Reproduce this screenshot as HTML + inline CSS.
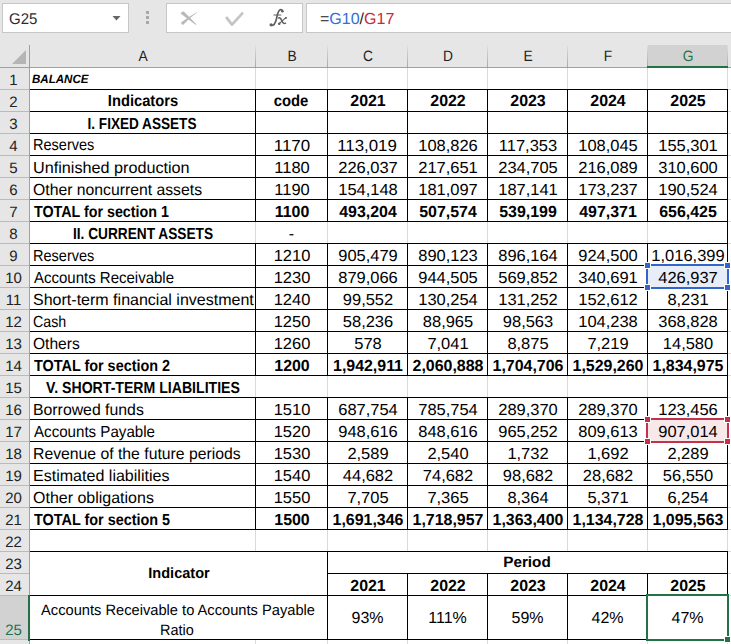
<!DOCTYPE html>
<html><head><meta charset="utf-8"><style>
html,body{margin:0;padding:0;}
body{width:731px;height:644px;overflow:hidden;position:relative;background:#e6e6e6;font-family:"Liberation Sans",sans-serif;}
.bg{position:absolute;left:0;top:0;width:731px;height:45px;background:#e6e6e6}
.box{position:absolute;background:#fff;border:1px solid #c6c6c6}
.r{position:absolute}
.ic{position:absolute}
.t{position:absolute;white-space:nowrap;color:#000;text-rendering:geometricPrecision}
.c{transform:translateX(-50%)}
</style></head><body>
<div class="bg"></div>
<div class="box" style="left:2px;top:3px;width:125px;height:28px"></div>
<div class="t" style="left:9px;top:10px;font-size:15.5px;color:#2a2a2a;line-height:20px;transform-origin:0 0;transform:scaleX(0.97)">G25</div>
<svg class="ic" style="left:112px;top:16px" width="9" height="5"><path d="M0.5 0 L8.5 0 L4.5 4.5 Z" fill="#666"/></svg>
<div class="r" style="left:146px;top:11px;width:3px;height:3px;background:#a8a8a8"></div>
<div class="r" style="left:146px;top:16px;width:3px;height:3px;background:#a8a8a8"></div>
<div class="r" style="left:146px;top:21px;width:3px;height:3px;background:#a8a8a8"></div>
<div class="box" style="left:166px;top:3px;width:135px;height:28px"></div>
<svg class="ic" style="left:170px;top:4px" width="80" height="28"><path d="M10.6 9.4 Q11.8 7.2 13.8 7.6 Q20 14 26.6 20.4 L25.6 20.8 Q18 15 10.6 9.4 Z" fill="#b9b9b9"/><path d="M26.8 8.2 Q19 12.5 11 18.6 Q11.2 20.6 13 20.9 Q19 14 26.9 8.7 Z" fill="#b9b9b9"/><path d="M56.6 13.6 L62 20.6 L73 8.6" stroke="#c4c4c4" stroke-width="2.7" stroke-linecap="butt" stroke-linejoin="round" fill="none"/><circle cx="56.8" cy="13.8" r="1.35" fill="#c4c4c4"/></svg>
<svg class="ic" style="left:264px;top:4px" width="30" height="26"><g fill="none" stroke="#5f5f5f" stroke-linecap="round"><path d="M18.6 7.2 C18.6 5.6 16.8 5.2 15.6 6.2 C13.9 7.6 13.3 11 12.4 15 C11.5 19 10.6 21.6 7.4 21.5" stroke-width="1.7"/><path d="M10 11 L16.8 11" stroke-width="1.2"/><path d="M14.6 14 C16.2 13.2 17 15 18 17 C19 19 19.6 20.3 21.6 19.2" stroke-width="1.5"/><path d="M22.2 13.8 C20.6 14.2 18 17.5 14.6 20" stroke-width="1.1"/></g><circle cx="18.3" cy="7.3" r="1.3" fill="#5f5f5f"/><circle cx="7" cy="20.7" r="1.5" fill="#5f5f5f"/><circle cx="15.3" cy="19.8" r="1.2" fill="#5f5f5f"/><circle cx="21.8" cy="14" r="1" fill="#5f5f5f"/></svg>
<div class="box" style="left:306px;top:3px;width:440px;height:28px"></div>
<div class="t" style="left:320px;top:9px;font-size:16px;line-height:21px;color:#222">=<span style="color:#2f6fd6">G10</span>/<span style="color:#c9283d">G17</span></div>
<div class="r" style="left:0;top:45px;width:731px;height:599px;background:#fff"></div>
<div class="r" style="left:0;top:45px;width:731px;height:22px;background:#e6e6e6"></div>
<div class="r" style="left:0;top:45px;width:29px;height:599px;background:#e6e6e6"></div>
<div class="r" style="left:648px;top:45px;width:79px;height:22px;background:#d2d2d2"></div>
<div class="r" style="left:0;top:596px;width:29px;height:44px;background:#d2d2d2"></div>
<div class="r" style="left:30px;top:89px;width:701px;height:1px;background:#dadada"></div>
<div class="r" style="left:30px;top:111px;width:701px;height:1px;background:#dadada"></div>
<div class="r" style="left:30px;top:133px;width:701px;height:1px;background:#dadada"></div>
<div class="r" style="left:30px;top:155px;width:701px;height:1px;background:#dadada"></div>
<div class="r" style="left:30px;top:177px;width:701px;height:1px;background:#dadada"></div>
<div class="r" style="left:30px;top:199px;width:701px;height:1px;background:#dadada"></div>
<div class="r" style="left:30px;top:221px;width:701px;height:1px;background:#dadada"></div>
<div class="r" style="left:30px;top:243px;width:701px;height:1px;background:#dadada"></div>
<div class="r" style="left:30px;top:265px;width:701px;height:1px;background:#dadada"></div>
<div class="r" style="left:30px;top:287px;width:701px;height:1px;background:#dadada"></div>
<div class="r" style="left:30px;top:309px;width:701px;height:1px;background:#dadada"></div>
<div class="r" style="left:30px;top:331px;width:701px;height:1px;background:#dadada"></div>
<div class="r" style="left:30px;top:353px;width:701px;height:1px;background:#dadada"></div>
<div class="r" style="left:30px;top:375px;width:701px;height:1px;background:#dadada"></div>
<div class="r" style="left:30px;top:397px;width:701px;height:1px;background:#dadada"></div>
<div class="r" style="left:30px;top:419px;width:701px;height:1px;background:#dadada"></div>
<div class="r" style="left:30px;top:441px;width:701px;height:1px;background:#dadada"></div>
<div class="r" style="left:30px;top:463px;width:701px;height:1px;background:#dadada"></div>
<div class="r" style="left:30px;top:485px;width:701px;height:1px;background:#dadada"></div>
<div class="r" style="left:30px;top:507px;width:701px;height:1px;background:#dadada"></div>
<div class="r" style="left:30px;top:529px;width:701px;height:1px;background:#dadada"></div>
<div class="r" style="left:30px;top:551px;width:701px;height:1px;background:#dadada"></div>
<div class="r" style="left:30px;top:573px;width:701px;height:1px;background:#dadada"></div>
<div class="r" style="left:30px;top:595px;width:701px;height:1px;background:#dadada"></div>
<div class="r" style="left:30px;top:639px;width:701px;height:1px;background:#dadada"></div>
<div class="r" style="left:255px;top:68px;width:1px;height:576px;background:#dadada"></div>
<div class="r" style="left:327px;top:68px;width:1px;height:576px;background:#dadada"></div>
<div class="r" style="left:407px;top:68px;width:1px;height:576px;background:#dadada"></div>
<div class="r" style="left:487px;top:68px;width:1px;height:576px;background:#dadada"></div>
<div class="r" style="left:567px;top:68px;width:1px;height:576px;background:#dadada"></div>
<div class="r" style="left:647px;top:68px;width:1px;height:576px;background:#dadada"></div>
<div class="r" style="left:727px;top:68px;width:1px;height:576px;background:#dadada"></div>
<div class="r" style="left:0;top:89px;width:29px;height:1px;background:#bababa"></div>
<div class="r" style="left:0;top:111px;width:29px;height:1px;background:#bababa"></div>
<div class="r" style="left:0;top:133px;width:29px;height:1px;background:#bababa"></div>
<div class="r" style="left:0;top:155px;width:29px;height:1px;background:#bababa"></div>
<div class="r" style="left:0;top:177px;width:29px;height:1px;background:#bababa"></div>
<div class="r" style="left:0;top:199px;width:29px;height:1px;background:#bababa"></div>
<div class="r" style="left:0;top:221px;width:29px;height:1px;background:#bababa"></div>
<div class="r" style="left:0;top:243px;width:29px;height:1px;background:#bababa"></div>
<div class="r" style="left:0;top:265px;width:29px;height:1px;background:#bababa"></div>
<div class="r" style="left:0;top:287px;width:29px;height:1px;background:#bababa"></div>
<div class="r" style="left:0;top:309px;width:29px;height:1px;background:#bababa"></div>
<div class="r" style="left:0;top:331px;width:29px;height:1px;background:#bababa"></div>
<div class="r" style="left:0;top:353px;width:29px;height:1px;background:#bababa"></div>
<div class="r" style="left:0;top:375px;width:29px;height:1px;background:#bababa"></div>
<div class="r" style="left:0;top:397px;width:29px;height:1px;background:#bababa"></div>
<div class="r" style="left:0;top:419px;width:29px;height:1px;background:#bababa"></div>
<div class="r" style="left:0;top:441px;width:29px;height:1px;background:#bababa"></div>
<div class="r" style="left:0;top:463px;width:29px;height:1px;background:#bababa"></div>
<div class="r" style="left:0;top:485px;width:29px;height:1px;background:#bababa"></div>
<div class="r" style="left:0;top:507px;width:29px;height:1px;background:#bababa"></div>
<div class="r" style="left:0;top:529px;width:29px;height:1px;background:#bababa"></div>
<div class="r" style="left:0;top:551px;width:29px;height:1px;background:#bababa"></div>
<div class="r" style="left:0;top:573px;width:29px;height:1px;background:#bababa"></div>
<div class="r" style="left:0;top:595px;width:29px;height:1px;background:#bababa"></div>
<div class="r" style="left:0;top:639px;width:29px;height:1px;background:#bababa"></div>
<div class="r" style="left:255px;top:45px;width:1px;height:22px;background:linear-gradient(#e0e0e0,#a8a8a8)"></div>
<div class="r" style="left:327px;top:45px;width:1px;height:22px;background:linear-gradient(#e0e0e0,#a8a8a8)"></div>
<div class="r" style="left:407px;top:45px;width:1px;height:22px;background:linear-gradient(#e0e0e0,#a8a8a8)"></div>
<div class="r" style="left:487px;top:45px;width:1px;height:22px;background:linear-gradient(#e0e0e0,#a8a8a8)"></div>
<div class="r" style="left:567px;top:45px;width:1px;height:22px;background:linear-gradient(#e0e0e0,#a8a8a8)"></div>
<div class="r" style="left:647px;top:45px;width:1px;height:22px;background:linear-gradient(#e0e0e0,#a8a8a8)"></div>
<div class="r" style="left:727px;top:45px;width:1px;height:22px;background:linear-gradient(#e0e0e0,#a8a8a8)"></div>
<div class="r" style="left:0;top:67px;width:731px;height:1px;background:#a0a0a0"></div>
<div class="r" style="left:29px;top:45px;width:1px;height:599px;background:#a0a0a0"></div>
<svg class="ic" style="left:0;top:45px" width="29" height="22"><path d="M12 19 L26 5 L26 19 Z" fill="#b5b5b5"/></svg>
<div class="t" style="left:143.0px;top:46px;line-height:22px;font-size:15px;color:#222;transform:translateX(-50%) scaleX(0.92)">A</div>
<div class="t" style="left:292.0px;top:46px;line-height:22px;font-size:15px;color:#222;transform:translateX(-50%) scaleX(0.92)">B</div>
<div class="t" style="left:368.0px;top:46px;line-height:22px;font-size:15px;color:#222;transform:translateX(-50%) scaleX(0.92)">C</div>
<div class="t" style="left:448.0px;top:46px;line-height:22px;font-size:15px;color:#222;transform:translateX(-50%) scaleX(0.92)">D</div>
<div class="t" style="left:528.0px;top:46px;line-height:22px;font-size:15px;color:#222;transform:translateX(-50%) scaleX(0.92)">E</div>
<div class="t" style="left:608.0px;top:46px;line-height:22px;font-size:15px;color:#222;transform:translateX(-50%) scaleX(0.92)">F</div>
<div class="t" style="left:688.0px;top:46px;line-height:22px;font-size:15px;color:#217346;transform:translateX(-50%) scaleX(0.92)">G</div>
<div class="r" style="left:647px;top:66px;width:81px;height:2px;background:#217346"></div>
<div class="r" style="left:28px;top:595px;width:2px;height:46px;background:#217346"></div>
<div class="t" style="left:-1px;width:29px;text-align:center;top:70px;line-height:22px;font-size:15px;color:#222">1</div>
<div class="t" style="left:-1px;width:29px;text-align:center;top:92px;line-height:22px;font-size:15px;color:#222">2</div>
<div class="t" style="left:-1px;width:29px;text-align:center;top:114px;line-height:22px;font-size:15px;color:#222">3</div>
<div class="t" style="left:-1px;width:29px;text-align:center;top:136px;line-height:22px;font-size:15px;color:#222">4</div>
<div class="t" style="left:-1px;width:29px;text-align:center;top:158px;line-height:22px;font-size:15px;color:#222">5</div>
<div class="t" style="left:-1px;width:29px;text-align:center;top:180px;line-height:22px;font-size:15px;color:#222">6</div>
<div class="t" style="left:-1px;width:29px;text-align:center;top:202px;line-height:22px;font-size:15px;color:#222">7</div>
<div class="t" style="left:-1px;width:29px;text-align:center;top:224px;line-height:22px;font-size:15px;color:#222">8</div>
<div class="t" style="left:-1px;width:29px;text-align:center;top:246px;line-height:22px;font-size:15px;color:#222">9</div>
<div class="t" style="left:-1px;width:29px;text-align:center;top:268px;line-height:22px;font-size:15px;color:#222">10</div>
<div class="t" style="left:-1px;width:29px;text-align:center;top:290px;line-height:22px;font-size:15px;color:#222">11</div>
<div class="t" style="left:-1px;width:29px;text-align:center;top:312px;line-height:22px;font-size:15px;color:#222">12</div>
<div class="t" style="left:-1px;width:29px;text-align:center;top:334px;line-height:22px;font-size:15px;color:#222">13</div>
<div class="t" style="left:-1px;width:29px;text-align:center;top:356px;line-height:22px;font-size:15px;color:#222">14</div>
<div class="t" style="left:-1px;width:29px;text-align:center;top:378px;line-height:22px;font-size:15px;color:#222">15</div>
<div class="t" style="left:-1px;width:29px;text-align:center;top:400px;line-height:22px;font-size:15px;color:#222">16</div>
<div class="t" style="left:-1px;width:29px;text-align:center;top:422px;line-height:22px;font-size:15px;color:#222">17</div>
<div class="t" style="left:-1px;width:29px;text-align:center;top:444px;line-height:22px;font-size:15px;color:#222">18</div>
<div class="t" style="left:-1px;width:29px;text-align:center;top:466px;line-height:22px;font-size:15px;color:#222">19</div>
<div class="t" style="left:-1px;width:29px;text-align:center;top:488px;line-height:22px;font-size:15px;color:#222">20</div>
<div class="t" style="left:-1px;width:29px;text-align:center;top:510px;line-height:22px;font-size:15px;color:#222">21</div>
<div class="t" style="left:-1px;width:29px;text-align:center;top:532px;line-height:22px;font-size:15px;color:#222">22</div>
<div class="t" style="left:-1px;width:29px;text-align:center;top:554px;line-height:22px;font-size:15px;color:#222">23</div>
<div class="t" style="left:-1px;width:29px;text-align:center;top:576px;line-height:22px;font-size:15px;color:#222">24</div>
<div class="t" style="left:-1px;width:29px;text-align:center;top:620px;line-height:22px;font-size:15px;color:#217346">25</div>
<div class="t" style="left:-1px;width:29px;text-align:center;top:642px;line-height:22px;font-size:15px;color:#222">26</div>
<div class="r" style="left:30px;top:552px;width:297px;height:87px;background:#fff"></div>
<div class="r" style="left:328px;top:552px;width:399px;height:21px;background:#fff"></div>
<div class="r" style="left:30px;top:89px;width:698px;height:1px;background:#000"></div>
<div class="r" style="left:30px;top:111px;width:698px;height:1px;background:#000"></div>
<div class="r" style="left:30px;top:133px;width:698px;height:1px;background:#000"></div>
<div class="r" style="left:30px;top:155px;width:698px;height:1px;background:#000"></div>
<div class="r" style="left:30px;top:177px;width:698px;height:1px;background:#000"></div>
<div class="r" style="left:30px;top:199px;width:698px;height:1px;background:#000"></div>
<div class="r" style="left:30px;top:221px;width:698px;height:1px;background:#000"></div>
<div class="r" style="left:30px;top:243px;width:698px;height:1px;background:#000"></div>
<div class="r" style="left:30px;top:265px;width:698px;height:1px;background:#000"></div>
<div class="r" style="left:30px;top:287px;width:698px;height:1px;background:#000"></div>
<div class="r" style="left:30px;top:309px;width:698px;height:1px;background:#000"></div>
<div class="r" style="left:30px;top:331px;width:698px;height:1px;background:#000"></div>
<div class="r" style="left:30px;top:353px;width:698px;height:1px;background:#000"></div>
<div class="r" style="left:30px;top:375px;width:698px;height:1px;background:#000"></div>
<div class="r" style="left:30px;top:397px;width:698px;height:1px;background:#000"></div>
<div class="r" style="left:30px;top:419px;width:698px;height:1px;background:#000"></div>
<div class="r" style="left:30px;top:441px;width:698px;height:1px;background:#000"></div>
<div class="r" style="left:30px;top:463px;width:698px;height:1px;background:#000"></div>
<div class="r" style="left:30px;top:485px;width:698px;height:1px;background:#000"></div>
<div class="r" style="left:30px;top:507px;width:698px;height:1px;background:#000"></div>
<div class="r" style="left:30px;top:529px;width:698px;height:1px;background:#000"></div>
<div class="r" style="left:255px;top:89px;width:1px;height:23px;background:#000"></div>
<div class="r" style="left:327px;top:89px;width:1px;height:23px;background:#000"></div>
<div class="r" style="left:407px;top:89px;width:1px;height:23px;background:#000"></div>
<div class="r" style="left:487px;top:89px;width:1px;height:23px;background:#000"></div>
<div class="r" style="left:567px;top:89px;width:1px;height:23px;background:#000"></div>
<div class="r" style="left:647px;top:89px;width:1px;height:23px;background:#000"></div>
<div class="r" style="left:727px;top:89px;width:1px;height:23px;background:#000"></div>
<div class="r" style="left:255px;top:111px;width:1px;height:23px;background:#000"></div>
<div class="r" style="left:327px;top:111px;width:1px;height:23px;background:#000"></div>
<div class="r" style="left:407px;top:111px;width:1px;height:23px;background:#000"></div>
<div class="r" style="left:487px;top:111px;width:1px;height:23px;background:#000"></div>
<div class="r" style="left:567px;top:111px;width:1px;height:23px;background:#000"></div>
<div class="r" style="left:647px;top:111px;width:1px;height:23px;background:#000"></div>
<div class="r" style="left:727px;top:111px;width:1px;height:23px;background:#000"></div>
<div class="r" style="left:255px;top:133px;width:1px;height:23px;background:#000"></div>
<div class="r" style="left:327px;top:133px;width:1px;height:23px;background:#000"></div>
<div class="r" style="left:407px;top:133px;width:1px;height:23px;background:#000"></div>
<div class="r" style="left:487px;top:133px;width:1px;height:23px;background:#000"></div>
<div class="r" style="left:567px;top:133px;width:1px;height:23px;background:#000"></div>
<div class="r" style="left:647px;top:133px;width:1px;height:23px;background:#000"></div>
<div class="r" style="left:727px;top:133px;width:1px;height:23px;background:#000"></div>
<div class="r" style="left:255px;top:155px;width:1px;height:23px;background:#000"></div>
<div class="r" style="left:327px;top:155px;width:1px;height:23px;background:#000"></div>
<div class="r" style="left:407px;top:155px;width:1px;height:23px;background:#000"></div>
<div class="r" style="left:487px;top:155px;width:1px;height:23px;background:#000"></div>
<div class="r" style="left:567px;top:155px;width:1px;height:23px;background:#000"></div>
<div class="r" style="left:647px;top:155px;width:1px;height:23px;background:#000"></div>
<div class="r" style="left:727px;top:155px;width:1px;height:23px;background:#000"></div>
<div class="r" style="left:255px;top:177px;width:1px;height:23px;background:#000"></div>
<div class="r" style="left:327px;top:177px;width:1px;height:23px;background:#000"></div>
<div class="r" style="left:407px;top:177px;width:1px;height:23px;background:#000"></div>
<div class="r" style="left:487px;top:177px;width:1px;height:23px;background:#000"></div>
<div class="r" style="left:567px;top:177px;width:1px;height:23px;background:#000"></div>
<div class="r" style="left:647px;top:177px;width:1px;height:23px;background:#000"></div>
<div class="r" style="left:727px;top:177px;width:1px;height:23px;background:#000"></div>
<div class="r" style="left:255px;top:199px;width:1px;height:23px;background:#000"></div>
<div class="r" style="left:327px;top:199px;width:1px;height:23px;background:#000"></div>
<div class="r" style="left:407px;top:199px;width:1px;height:23px;background:#000"></div>
<div class="r" style="left:487px;top:199px;width:1px;height:23px;background:#000"></div>
<div class="r" style="left:567px;top:199px;width:1px;height:23px;background:#000"></div>
<div class="r" style="left:647px;top:199px;width:1px;height:23px;background:#000"></div>
<div class="r" style="left:727px;top:199px;width:1px;height:23px;background:#000"></div>
<div class="r" style="left:727px;top:221px;width:1px;height:23px;background:#000"></div>
<div class="r" style="left:255px;top:243px;width:1px;height:23px;background:#000"></div>
<div class="r" style="left:327px;top:243px;width:1px;height:23px;background:#000"></div>
<div class="r" style="left:407px;top:243px;width:1px;height:23px;background:#000"></div>
<div class="r" style="left:487px;top:243px;width:1px;height:23px;background:#000"></div>
<div class="r" style="left:567px;top:243px;width:1px;height:23px;background:#000"></div>
<div class="r" style="left:647px;top:243px;width:1px;height:23px;background:#000"></div>
<div class="r" style="left:727px;top:243px;width:1px;height:23px;background:#000"></div>
<div class="r" style="left:255px;top:265px;width:1px;height:23px;background:#000"></div>
<div class="r" style="left:327px;top:265px;width:1px;height:23px;background:#000"></div>
<div class="r" style="left:407px;top:265px;width:1px;height:23px;background:#000"></div>
<div class="r" style="left:487px;top:265px;width:1px;height:23px;background:#000"></div>
<div class="r" style="left:567px;top:265px;width:1px;height:23px;background:#000"></div>
<div class="r" style="left:647px;top:265px;width:1px;height:23px;background:#000"></div>
<div class="r" style="left:727px;top:265px;width:1px;height:23px;background:#000"></div>
<div class="r" style="left:255px;top:287px;width:1px;height:23px;background:#000"></div>
<div class="r" style="left:327px;top:287px;width:1px;height:23px;background:#000"></div>
<div class="r" style="left:407px;top:287px;width:1px;height:23px;background:#000"></div>
<div class="r" style="left:487px;top:287px;width:1px;height:23px;background:#000"></div>
<div class="r" style="left:567px;top:287px;width:1px;height:23px;background:#000"></div>
<div class="r" style="left:647px;top:287px;width:1px;height:23px;background:#000"></div>
<div class="r" style="left:727px;top:287px;width:1px;height:23px;background:#000"></div>
<div class="r" style="left:255px;top:309px;width:1px;height:23px;background:#000"></div>
<div class="r" style="left:327px;top:309px;width:1px;height:23px;background:#000"></div>
<div class="r" style="left:407px;top:309px;width:1px;height:23px;background:#000"></div>
<div class="r" style="left:487px;top:309px;width:1px;height:23px;background:#000"></div>
<div class="r" style="left:567px;top:309px;width:1px;height:23px;background:#000"></div>
<div class="r" style="left:647px;top:309px;width:1px;height:23px;background:#000"></div>
<div class="r" style="left:727px;top:309px;width:1px;height:23px;background:#000"></div>
<div class="r" style="left:255px;top:331px;width:1px;height:23px;background:#000"></div>
<div class="r" style="left:327px;top:331px;width:1px;height:23px;background:#000"></div>
<div class="r" style="left:407px;top:331px;width:1px;height:23px;background:#000"></div>
<div class="r" style="left:487px;top:331px;width:1px;height:23px;background:#000"></div>
<div class="r" style="left:567px;top:331px;width:1px;height:23px;background:#000"></div>
<div class="r" style="left:647px;top:331px;width:1px;height:23px;background:#000"></div>
<div class="r" style="left:727px;top:331px;width:1px;height:23px;background:#000"></div>
<div class="r" style="left:255px;top:353px;width:1px;height:23px;background:#000"></div>
<div class="r" style="left:327px;top:353px;width:1px;height:23px;background:#000"></div>
<div class="r" style="left:407px;top:353px;width:1px;height:23px;background:#000"></div>
<div class="r" style="left:487px;top:353px;width:1px;height:23px;background:#000"></div>
<div class="r" style="left:567px;top:353px;width:1px;height:23px;background:#000"></div>
<div class="r" style="left:647px;top:353px;width:1px;height:23px;background:#000"></div>
<div class="r" style="left:727px;top:353px;width:1px;height:23px;background:#000"></div>
<div class="r" style="left:727px;top:375px;width:1px;height:23px;background:#000"></div>
<div class="r" style="left:255px;top:397px;width:1px;height:23px;background:#000"></div>
<div class="r" style="left:327px;top:397px;width:1px;height:23px;background:#000"></div>
<div class="r" style="left:407px;top:397px;width:1px;height:23px;background:#000"></div>
<div class="r" style="left:487px;top:397px;width:1px;height:23px;background:#000"></div>
<div class="r" style="left:567px;top:397px;width:1px;height:23px;background:#000"></div>
<div class="r" style="left:647px;top:397px;width:1px;height:23px;background:#000"></div>
<div class="r" style="left:727px;top:397px;width:1px;height:23px;background:#000"></div>
<div class="r" style="left:255px;top:419px;width:1px;height:23px;background:#000"></div>
<div class="r" style="left:327px;top:419px;width:1px;height:23px;background:#000"></div>
<div class="r" style="left:407px;top:419px;width:1px;height:23px;background:#000"></div>
<div class="r" style="left:487px;top:419px;width:1px;height:23px;background:#000"></div>
<div class="r" style="left:567px;top:419px;width:1px;height:23px;background:#000"></div>
<div class="r" style="left:647px;top:419px;width:1px;height:23px;background:#000"></div>
<div class="r" style="left:727px;top:419px;width:1px;height:23px;background:#000"></div>
<div class="r" style="left:255px;top:441px;width:1px;height:23px;background:#000"></div>
<div class="r" style="left:327px;top:441px;width:1px;height:23px;background:#000"></div>
<div class="r" style="left:407px;top:441px;width:1px;height:23px;background:#000"></div>
<div class="r" style="left:487px;top:441px;width:1px;height:23px;background:#000"></div>
<div class="r" style="left:567px;top:441px;width:1px;height:23px;background:#000"></div>
<div class="r" style="left:647px;top:441px;width:1px;height:23px;background:#000"></div>
<div class="r" style="left:727px;top:441px;width:1px;height:23px;background:#000"></div>
<div class="r" style="left:255px;top:463px;width:1px;height:23px;background:#000"></div>
<div class="r" style="left:327px;top:463px;width:1px;height:23px;background:#000"></div>
<div class="r" style="left:407px;top:463px;width:1px;height:23px;background:#000"></div>
<div class="r" style="left:487px;top:463px;width:1px;height:23px;background:#000"></div>
<div class="r" style="left:567px;top:463px;width:1px;height:23px;background:#000"></div>
<div class="r" style="left:647px;top:463px;width:1px;height:23px;background:#000"></div>
<div class="r" style="left:727px;top:463px;width:1px;height:23px;background:#000"></div>
<div class="r" style="left:255px;top:485px;width:1px;height:23px;background:#000"></div>
<div class="r" style="left:327px;top:485px;width:1px;height:23px;background:#000"></div>
<div class="r" style="left:407px;top:485px;width:1px;height:23px;background:#000"></div>
<div class="r" style="left:487px;top:485px;width:1px;height:23px;background:#000"></div>
<div class="r" style="left:567px;top:485px;width:1px;height:23px;background:#000"></div>
<div class="r" style="left:647px;top:485px;width:1px;height:23px;background:#000"></div>
<div class="r" style="left:727px;top:485px;width:1px;height:23px;background:#000"></div>
<div class="r" style="left:255px;top:507px;width:1px;height:23px;background:#000"></div>
<div class="r" style="left:327px;top:507px;width:1px;height:23px;background:#000"></div>
<div class="r" style="left:407px;top:507px;width:1px;height:23px;background:#000"></div>
<div class="r" style="left:487px;top:507px;width:1px;height:23px;background:#000"></div>
<div class="r" style="left:567px;top:507px;width:1px;height:23px;background:#000"></div>
<div class="r" style="left:647px;top:507px;width:1px;height:23px;background:#000"></div>
<div class="r" style="left:727px;top:507px;width:1px;height:23px;background:#000"></div>
<div class="r" style="left:30px;top:551px;width:698px;height:1px;background:#000"></div>
<div class="r" style="left:327px;top:573px;width:401px;height:1px;background:#000"></div>
<div class="r" style="left:30px;top:595px;width:698px;height:1px;background:#000"></div>
<div class="r" style="left:30px;top:639px;width:698px;height:1px;background:#000"></div>
<div class="r" style="left:327px;top:551px;width:1px;height:89px;background:#000"></div>
<div class="r" style="left:727px;top:551px;width:1px;height:89px;background:#000"></div>
<div class="r" style="left:407px;top:573px;width:1px;height:67px;background:#000"></div>
<div class="r" style="left:487px;top:573px;width:1px;height:67px;background:#000"></div>
<div class="r" style="left:567px;top:573px;width:1px;height:67px;background:#000"></div>
<div class="r" style="left:647px;top:573px;width:1px;height:67px;background:#000"></div>
<div class="r" style="left:648px;top:266px;width:79px;height:21px;background:#e8eef9"></div>
<div class="r" style="left:646px;top:264px;width:83px;height:2px;background:#3366cc"></div>
<div class="r" style="left:646px;top:287px;width:83px;height:2px;background:#3366cc"></div>
<div class="r" style="left:646px;top:264px;width:2px;height:25px;background:#3366cc"></div>
<div class="r" style="left:727px;top:264px;width:2px;height:25px;background:#3366cc"></div>
<div class="r" style="left:645px;top:263px;width:5px;height:5px;background:#3366cc;box-shadow:0 0 0 1px #fff"></div>
<div class="r" style="left:725px;top:263px;width:5px;height:5px;background:#3366cc;box-shadow:0 0 0 1px #fff"></div>
<div class="r" style="left:645px;top:285px;width:5px;height:5px;background:#3366cc;box-shadow:0 0 0 1px #fff"></div>
<div class="r" style="left:725px;top:285px;width:5px;height:5px;background:#3366cc;box-shadow:0 0 0 1px #fff"></div>
<div class="r" style="left:648px;top:420px;width:79px;height:21px;background:#f9e8ea"></div>
<div class="r" style="left:646px;top:418px;width:83px;height:2px;background:#c4314b"></div>
<div class="r" style="left:646px;top:441px;width:83px;height:2px;background:#c4314b"></div>
<div class="r" style="left:646px;top:418px;width:2px;height:25px;background:#c4314b"></div>
<div class="r" style="left:727px;top:418px;width:2px;height:25px;background:#c4314b"></div>
<div class="r" style="left:645px;top:417px;width:5px;height:5px;background:#c4314b;box-shadow:0 0 0 1px #fff"></div>
<div class="r" style="left:725px;top:417px;width:5px;height:5px;background:#c4314b;box-shadow:0 0 0 1px #fff"></div>
<div class="r" style="left:645px;top:439px;width:5px;height:5px;background:#c4314b;box-shadow:0 0 0 1px #fff"></div>
<div class="r" style="left:725px;top:439px;width:5px;height:5px;background:#c4314b;box-shadow:0 0 0 1px #fff"></div>
<div id="bal" class="t" style="left:32.40px;top:69.84px;font-size:12px;line-height:18px;color:#000;font-weight:bold;font-style:italic;transform-origin:0 0;transform:scaleX(0.9628)">BALANCE</div>
<div id="c0_2" class="t" style="left:142.50px;top:91.46px;font-size:16px;line-height:22px;color:#000;font-weight:bold;transform:translateX(-50%) scaleX(0.9191)">Indicators</div>
<div id="c1_2" class="t" style="left:291.40px;top:91.46px;font-size:16px;line-height:22px;color:#000;font-weight:bold;transform:translateX(-50%) scaleX(0.9279)">code</div>
<div id="c2_2" class="t" style="left:367.50px;top:91.46px;font-size:16px;line-height:22px;color:#000;font-weight:bold;transform:translateX(-50%) scaleX(0.9950)">2021</div>
<div id="c3_2" class="t" style="left:447.50px;top:91.46px;font-size:16px;line-height:22px;color:#000;font-weight:bold;transform:translateX(-50%) scaleX(0.9950)">2022</div>
<div id="c4_2" class="t" style="left:527.50px;top:91.46px;font-size:16px;line-height:22px;color:#000;font-weight:bold;transform:translateX(-50%) scaleX(0.9950)">2023</div>
<div id="c5_2" class="t" style="left:607.50px;top:91.46px;font-size:16px;line-height:22px;color:#000;font-weight:bold;transform:translateX(-50%) scaleX(0.9950)">2024</div>
<div id="c6_2" class="t" style="left:687.50px;top:91.46px;font-size:16px;line-height:22px;color:#000;font-weight:bold;transform:translateX(-50%) scaleX(0.9950)">2025</div>
<div id="c0_3" class="t" style="left:141.70px;top:114.46px;font-size:16px;line-height:22px;color:#000;font-weight:bold;transform:translateX(-50%) scaleX(0.8492)">I. FIXED ASSETS</div>
<div id="c0_8" class="t" style="left:143.00px;top:224.46px;font-size:16px;line-height:22px;color:#000;font-weight:bold;transform:translateX(-50%) scaleX(0.8552)">II. CURRENT ASSETS</div>
<div id="c1_8" class="t" style="left:291.50px;top:224.46px;font-size:16px;line-height:22px;color:#000;transform:translateX(-50%) scaleX(1.0000)">-</div>
<div id="c0_15" class="t" style="left:142.90px;top:378.46px;font-size:16px;line-height:22px;color:#000;font-weight:bold;transform:translateX(-50%) scaleX(0.8814)">V. SHORT-TERM LIABILITIES</div>
<div id="c1_4" class="t" style="left:291.90px;top:136.46px;font-size:16px;line-height:22px;color:#000;transform:translateX(-50%) scaleX(1.0563)">1170</div>
<div id="c2_4" class="t" style="left:367.00px;top:136.46px;font-size:16px;line-height:22px;color:#000;transform:translateX(-50%) scaleX(1.0534)">113,019</div>
<div id="c0_4" class="t" style="left:33.00px;top:135.46px;font-size:16px;line-height:22px;color:#000;transform-origin:0 0;transform:scaleX(0.9073)">Reserves</div>
<div id="c3_4" class="t" style="left:447.50px;top:136.46px;font-size:16px;line-height:22px;color:#000;transform:translateX(-50%) scaleX(1.0300)">108,826</div>
<div id="c4_4" class="t" style="left:527.50px;top:136.46px;font-size:16px;line-height:22px;color:#000;transform:translateX(-50%) scaleX(1.0300)">117,353</div>
<div id="c5_4" class="t" style="left:607.50px;top:136.46px;font-size:16px;line-height:22px;color:#000;transform:translateX(-50%) scaleX(1.0300)">108,045</div>
<div id="c6_4" class="t" style="left:687.50px;top:136.46px;font-size:16px;line-height:22px;color:#000;transform:translateX(-50%) scaleX(1.0300)">155,301</div>
<div id="c0_5" class="t" style="left:33.00px;top:158.46px;font-size:16px;line-height:22px;color:#000;transform-origin:0 0;transform:scaleX(1.0117)">Unfinished production</div>
<div id="c1_5" class="t" style="left:291.50px;top:158.46px;font-size:16px;line-height:22px;color:#000;transform:translateX(-50%) scaleX(1.0300)">1180</div>
<div id="c2_5" class="t" style="left:367.50px;top:158.46px;font-size:16px;line-height:22px;color:#000;transform:translateX(-50%) scaleX(1.0300)">226,037</div>
<div id="c3_5" class="t" style="left:447.50px;top:158.46px;font-size:16px;line-height:22px;color:#000;transform:translateX(-50%) scaleX(1.0300)">217,651</div>
<div id="c4_5" class="t" style="left:527.50px;top:158.46px;font-size:16px;line-height:22px;color:#000;transform:translateX(-50%) scaleX(1.0300)">234,705</div>
<div id="c5_5" class="t" style="left:607.50px;top:158.46px;font-size:16px;line-height:22px;color:#000;transform:translateX(-50%) scaleX(1.0300)">216,089</div>
<div id="c6_5" class="t" style="left:687.50px;top:158.46px;font-size:16px;line-height:22px;color:#000;transform:translateX(-50%) scaleX(1.0300)">310,600</div>
<div id="c0_6" class="t" style="left:33.00px;top:180.46px;font-size:16px;line-height:22px;color:#000;transform-origin:0 0;transform:scaleX(0.9847)">Other noncurrent assets</div>
<div id="c1_6" class="t" style="left:291.50px;top:180.46px;font-size:16px;line-height:22px;color:#000;transform:translateX(-50%) scaleX(1.0300)">1190</div>
<div id="c2_6" class="t" style="left:367.50px;top:180.46px;font-size:16px;line-height:22px;color:#000;transform:translateX(-50%) scaleX(1.0300)">154,148</div>
<div id="c3_6" class="t" style="left:447.50px;top:180.46px;font-size:16px;line-height:22px;color:#000;transform:translateX(-50%) scaleX(1.0300)">181,097</div>
<div id="c4_6" class="t" style="left:527.50px;top:180.46px;font-size:16px;line-height:22px;color:#000;transform:translateX(-50%) scaleX(1.0300)">187,141</div>
<div id="c5_6" class="t" style="left:607.50px;top:180.46px;font-size:16px;line-height:22px;color:#000;transform:translateX(-50%) scaleX(1.0300)">173,237</div>
<div id="c6_6" class="t" style="left:687.50px;top:180.46px;font-size:16px;line-height:22px;color:#000;transform:translateX(-50%) scaleX(1.0300)">190,524</div>
<div id="c0_7" class="t" style="left:34.00px;top:202.46px;font-size:16px;line-height:22px;color:#000;font-weight:bold;transform-origin:0 0;transform:scaleX(0.8923)">TOTAL for section 1</div>
<div id="c1_7" class="t" style="left:291.50px;top:202.46px;font-size:16px;line-height:22px;color:#000;font-weight:bold;transform:translateX(-50%) scaleX(0.9950)">1100</div>
<div id="c2_7" class="t" style="left:367.50px;top:202.46px;font-size:16px;line-height:22px;color:#000;font-weight:bold;transform:translateX(-50%) scaleX(0.9950)">493,204</div>
<div id="c3_7" class="t" style="left:447.50px;top:202.46px;font-size:16px;line-height:22px;color:#000;font-weight:bold;transform:translateX(-50%) scaleX(0.9950)">507,574</div>
<div id="c4_7" class="t" style="left:527.50px;top:202.46px;font-size:16px;line-height:22px;color:#000;font-weight:bold;transform:translateX(-50%) scaleX(0.9950)">539,199</div>
<div id="c5_7" class="t" style="left:607.50px;top:202.46px;font-size:16px;line-height:22px;color:#000;font-weight:bold;transform:translateX(-50%) scaleX(0.9950)">497,371</div>
<div id="c6_7" class="t" style="left:687.50px;top:202.46px;font-size:16px;line-height:22px;color:#000;font-weight:bold;transform:translateX(-50%) scaleX(0.9950)">656,425</div>
<div id="c0_9" class="t" style="left:33.00px;top:246.46px;font-size:16px;line-height:22px;color:#000;transform-origin:0 0;transform:scaleX(0.9073)">Reserves</div>
<div id="c1_9" class="t" style="left:291.50px;top:246.46px;font-size:16px;line-height:22px;color:#000;transform:translateX(-50%) scaleX(1.0300)">1210</div>
<div id="c2_9" class="t" style="left:367.50px;top:246.46px;font-size:16px;line-height:22px;color:#000;transform:translateX(-50%) scaleX(1.0300)">905,479</div>
<div id="c3_9" class="t" style="left:447.50px;top:246.46px;font-size:16px;line-height:22px;color:#000;transform:translateX(-50%) scaleX(1.0300)">890,123</div>
<div id="c4_9" class="t" style="left:527.50px;top:246.46px;font-size:16px;line-height:22px;color:#000;transform:translateX(-50%) scaleX(1.0300)">896,164</div>
<div id="c5_9" class="t" style="left:607.50px;top:246.46px;font-size:16px;line-height:22px;color:#000;transform:translateX(-50%) scaleX(1.0300)">924,500</div>
<div id="c6_9" class="t" style="left:687.50px;top:246.46px;font-size:16px;line-height:22px;color:#000;transform:translateX(-50%) scaleX(1.0300)">1,016,399</div>
<div id="c0_10" class="t" style="left:34.00px;top:268.46px;font-size:16px;line-height:22px;color:#000;transform-origin:0 0;transform:scaleX(0.9369)">Accounts Receivable</div>
<div id="c1_10" class="t" style="left:291.50px;top:268.46px;font-size:16px;line-height:22px;color:#000;transform:translateX(-50%) scaleX(1.0300)">1230</div>
<div id="c2_10" class="t" style="left:367.50px;top:268.46px;font-size:16px;line-height:22px;color:#000;transform:translateX(-50%) scaleX(1.0300)">879,066</div>
<div id="c3_10" class="t" style="left:447.50px;top:268.46px;font-size:16px;line-height:22px;color:#000;transform:translateX(-50%) scaleX(1.0300)">944,505</div>
<div id="c4_10" class="t" style="left:527.50px;top:268.46px;font-size:16px;line-height:22px;color:#000;transform:translateX(-50%) scaleX(1.0300)">569,852</div>
<div id="c5_10" class="t" style="left:607.50px;top:268.46px;font-size:16px;line-height:22px;color:#000;transform:translateX(-50%) scaleX(1.0300)">340,691</div>
<div id="c6_10" class="t" style="left:687.50px;top:268.46px;font-size:16px;line-height:22px;color:#000;transform:translateX(-50%) scaleX(1.0300)">426,937</div>
<div id="c0_11" class="t" style="left:33.00px;top:290.46px;font-size:16px;line-height:22px;color:#000;transform-origin:0 0;transform:scaleX(1.0013)">Short-term financial investment</div>
<div id="c1_11" class="t" style="left:291.50px;top:290.46px;font-size:16px;line-height:22px;color:#000;transform:translateX(-50%) scaleX(1.0300)">1240</div>
<div id="c2_11" class="t" style="left:367.50px;top:290.46px;font-size:16px;line-height:22px;color:#000;transform:translateX(-50%) scaleX(1.0300)">99,552</div>
<div id="c3_11" class="t" style="left:447.50px;top:290.46px;font-size:16px;line-height:22px;color:#000;transform:translateX(-50%) scaleX(1.0300)">130,254</div>
<div id="c4_11" class="t" style="left:527.50px;top:290.46px;font-size:16px;line-height:22px;color:#000;transform:translateX(-50%) scaleX(1.0300)">131,252</div>
<div id="c5_11" class="t" style="left:607.50px;top:290.46px;font-size:16px;line-height:22px;color:#000;transform:translateX(-50%) scaleX(1.0300)">152,612</div>
<div id="c6_11" class="t" style="left:687.50px;top:290.46px;font-size:16px;line-height:22px;color:#000;transform:translateX(-50%) scaleX(1.0300)">8,231</div>
<div id="c0_12" class="t" style="left:33.00px;top:312.46px;font-size:16px;line-height:22px;color:#000;transform-origin:0 0;transform:scaleX(0.8903)">Cash</div>
<div id="c1_12" class="t" style="left:291.50px;top:312.46px;font-size:16px;line-height:22px;color:#000;transform:translateX(-50%) scaleX(1.0300)">1250</div>
<div id="c2_12" class="t" style="left:367.50px;top:312.46px;font-size:16px;line-height:22px;color:#000;transform:translateX(-50%) scaleX(1.0300)">58,236</div>
<div id="c3_12" class="t" style="left:447.50px;top:312.46px;font-size:16px;line-height:22px;color:#000;transform:translateX(-50%) scaleX(1.0300)">88,965</div>
<div id="c4_12" class="t" style="left:527.50px;top:312.46px;font-size:16px;line-height:22px;color:#000;transform:translateX(-50%) scaleX(1.0300)">98,563</div>
<div id="c5_12" class="t" style="left:607.50px;top:312.46px;font-size:16px;line-height:22px;color:#000;transform:translateX(-50%) scaleX(1.0300)">104,238</div>
<div id="c6_12" class="t" style="left:687.50px;top:312.46px;font-size:16px;line-height:22px;color:#000;transform:translateX(-50%) scaleX(1.0300)">368,828</div>
<div id="c0_13" class="t" style="left:33.00px;top:334.46px;font-size:16px;line-height:22px;color:#000;transform-origin:0 0;transform:scaleX(0.9732)">Others</div>
<div id="c1_13" class="t" style="left:291.50px;top:334.46px;font-size:16px;line-height:22px;color:#000;transform:translateX(-50%) scaleX(1.0300)">1260</div>
<div id="c2_13" class="t" style="left:367.50px;top:334.46px;font-size:16px;line-height:22px;color:#000;transform:translateX(-50%) scaleX(1.0300)">578</div>
<div id="c3_13" class="t" style="left:447.50px;top:334.46px;font-size:16px;line-height:22px;color:#000;transform:translateX(-50%) scaleX(1.0300)">7,041</div>
<div id="c4_13" class="t" style="left:527.50px;top:334.46px;font-size:16px;line-height:22px;color:#000;transform:translateX(-50%) scaleX(1.0300)">8,875</div>
<div id="c5_13" class="t" style="left:607.50px;top:334.46px;font-size:16px;line-height:22px;color:#000;transform:translateX(-50%) scaleX(1.0300)">7,219</div>
<div id="c6_13" class="t" style="left:687.50px;top:334.46px;font-size:16px;line-height:22px;color:#000;transform:translateX(-50%) scaleX(1.0300)">14,580</div>
<div id="c0_14" class="t" style="left:34.00px;top:356.46px;font-size:16px;line-height:22px;color:#000;font-weight:bold;transform-origin:0 0;transform:scaleX(0.9003)">TOTAL for section 2</div>
<div id="c1_14" class="t" style="left:291.50px;top:356.46px;font-size:16px;line-height:22px;color:#000;font-weight:bold;transform:translateX(-50%) scaleX(0.9950)">1200</div>
<div id="c2_14" class="t" style="left:367.50px;top:356.46px;font-size:16px;line-height:22px;color:#000;font-weight:bold;transform:translateX(-50%) scaleX(0.9950)">1,942,911</div>
<div id="c3_14" class="t" style="left:447.50px;top:356.46px;font-size:16px;line-height:22px;color:#000;font-weight:bold;transform:translateX(-50%) scaleX(0.9950)">2,060,888</div>
<div id="c4_14" class="t" style="left:527.50px;top:356.46px;font-size:16px;line-height:22px;color:#000;font-weight:bold;transform:translateX(-50%) scaleX(0.9950)">1,704,706</div>
<div id="c5_14" class="t" style="left:607.50px;top:356.46px;font-size:16px;line-height:22px;color:#000;font-weight:bold;transform:translateX(-50%) scaleX(0.9950)">1,529,260</div>
<div id="c6_14" class="t" style="left:687.50px;top:356.46px;font-size:16px;line-height:22px;color:#000;font-weight:bold;transform:translateX(-50%) scaleX(0.9950)">1,834,975</div>
<div id="c0_16" class="t" style="left:33.00px;top:400.46px;font-size:16px;line-height:22px;color:#000;transform-origin:0 0;transform:scaleX(0.9890)">Borrowed funds</div>
<div id="c1_16" class="t" style="left:291.50px;top:400.46px;font-size:16px;line-height:22px;color:#000;transform:translateX(-50%) scaleX(1.0300)">1510</div>
<div id="c2_16" class="t" style="left:367.50px;top:400.46px;font-size:16px;line-height:22px;color:#000;transform:translateX(-50%) scaleX(1.0300)">687,754</div>
<div id="c3_16" class="t" style="left:447.50px;top:400.46px;font-size:16px;line-height:22px;color:#000;transform:translateX(-50%) scaleX(1.0300)">785,754</div>
<div id="c4_16" class="t" style="left:527.50px;top:400.46px;font-size:16px;line-height:22px;color:#000;transform:translateX(-50%) scaleX(1.0300)">289,370</div>
<div id="c5_16" class="t" style="left:607.50px;top:400.46px;font-size:16px;line-height:22px;color:#000;transform:translateX(-50%) scaleX(1.0300)">289,370</div>
<div id="c6_16" class="t" style="left:687.50px;top:400.46px;font-size:16px;line-height:22px;color:#000;transform:translateX(-50%) scaleX(1.0300)">123,456</div>
<div id="c0_17" class="t" style="left:34.00px;top:422.46px;font-size:16px;line-height:22px;color:#000;transform-origin:0 0;transform:scaleX(0.9443)">Accounts Payable</div>
<div id="c1_17" class="t" style="left:291.50px;top:422.46px;font-size:16px;line-height:22px;color:#000;transform:translateX(-50%) scaleX(1.0300)">1520</div>
<div id="c2_17" class="t" style="left:367.50px;top:422.46px;font-size:16px;line-height:22px;color:#000;transform:translateX(-50%) scaleX(1.0300)">948,616</div>
<div id="c3_17" class="t" style="left:447.50px;top:422.46px;font-size:16px;line-height:22px;color:#000;transform:translateX(-50%) scaleX(1.0300)">848,616</div>
<div id="c4_17" class="t" style="left:527.50px;top:422.46px;font-size:16px;line-height:22px;color:#000;transform:translateX(-50%) scaleX(1.0300)">965,252</div>
<div id="c5_17" class="t" style="left:607.50px;top:422.46px;font-size:16px;line-height:22px;color:#000;transform:translateX(-50%) scaleX(1.0300)">809,613</div>
<div id="c6_17" class="t" style="left:687.50px;top:422.46px;font-size:16px;line-height:22px;color:#000;transform:translateX(-50%) scaleX(1.0300)">907,014</div>
<div id="c0_18" class="t" style="left:33.00px;top:444.46px;font-size:16px;line-height:22px;color:#000;transform-origin:0 0;transform:scaleX(0.9848)">Revenue of the future periods</div>
<div id="c1_18" class="t" style="left:291.50px;top:444.46px;font-size:16px;line-height:22px;color:#000;transform:translateX(-50%) scaleX(1.0300)">1530</div>
<div id="c2_18" class="t" style="left:367.50px;top:444.46px;font-size:16px;line-height:22px;color:#000;transform:translateX(-50%) scaleX(1.0300)">2,589</div>
<div id="c3_18" class="t" style="left:447.50px;top:444.46px;font-size:16px;line-height:22px;color:#000;transform:translateX(-50%) scaleX(1.0300)">2,540</div>
<div id="c4_18" class="t" style="left:527.50px;top:444.46px;font-size:16px;line-height:22px;color:#000;transform:translateX(-50%) scaleX(1.0300)">1,732</div>
<div id="c5_18" class="t" style="left:607.50px;top:444.46px;font-size:16px;line-height:22px;color:#000;transform:translateX(-50%) scaleX(1.0300)">1,692</div>
<div id="c6_18" class="t" style="left:687.50px;top:444.46px;font-size:16px;line-height:22px;color:#000;transform:translateX(-50%) scaleX(1.0300)">2,289</div>
<div id="c0_19" class="t" style="left:33.00px;top:466.46px;font-size:16px;line-height:22px;color:#000;transform-origin:0 0;transform:scaleX(1.0030)">Estimated liabilities</div>
<div id="c1_19" class="t" style="left:291.50px;top:466.46px;font-size:16px;line-height:22px;color:#000;transform:translateX(-50%) scaleX(1.0300)">1540</div>
<div id="c2_19" class="t" style="left:367.50px;top:466.46px;font-size:16px;line-height:22px;color:#000;transform:translateX(-50%) scaleX(1.0300)">44,682</div>
<div id="c3_19" class="t" style="left:447.50px;top:466.46px;font-size:16px;line-height:22px;color:#000;transform:translateX(-50%) scaleX(1.0300)">74,682</div>
<div id="c4_19" class="t" style="left:527.50px;top:466.46px;font-size:16px;line-height:22px;color:#000;transform:translateX(-50%) scaleX(1.0300)">98,682</div>
<div id="c5_19" class="t" style="left:607.50px;top:466.46px;font-size:16px;line-height:22px;color:#000;transform:translateX(-50%) scaleX(1.0300)">28,682</div>
<div id="c6_19" class="t" style="left:687.50px;top:466.46px;font-size:16px;line-height:22px;color:#000;transform:translateX(-50%) scaleX(1.0300)">56,550</div>
<div id="c0_20" class="t" style="left:33.00px;top:488.46px;font-size:16px;line-height:22px;color:#000;transform-origin:0 0;transform:scaleX(0.9995)">Other obligations</div>
<div id="c1_20" class="t" style="left:291.50px;top:488.46px;font-size:16px;line-height:22px;color:#000;transform:translateX(-50%) scaleX(1.0300)">1550</div>
<div id="c2_20" class="t" style="left:367.50px;top:488.46px;font-size:16px;line-height:22px;color:#000;transform:translateX(-50%) scaleX(1.0300)">7,705</div>
<div id="c3_20" class="t" style="left:447.50px;top:488.46px;font-size:16px;line-height:22px;color:#000;transform:translateX(-50%) scaleX(1.0300)">7,365</div>
<div id="c4_20" class="t" style="left:527.50px;top:488.46px;font-size:16px;line-height:22px;color:#000;transform:translateX(-50%) scaleX(1.0300)">8,364</div>
<div id="c5_20" class="t" style="left:607.50px;top:488.46px;font-size:16px;line-height:22px;color:#000;transform:translateX(-50%) scaleX(1.0300)">5,371</div>
<div id="c6_20" class="t" style="left:687.50px;top:488.46px;font-size:16px;line-height:22px;color:#000;transform:translateX(-50%) scaleX(1.0300)">6,254</div>
<div id="c0_21" class="t" style="left:34.00px;top:510.46px;font-size:16px;line-height:22px;color:#000;font-weight:bold;transform-origin:0 0;transform:scaleX(0.9007)">TOTAL for section 5</div>
<div id="c1_21" class="t" style="left:291.50px;top:510.46px;font-size:16px;line-height:22px;color:#000;font-weight:bold;transform:translateX(-50%) scaleX(0.9950)">1500</div>
<div id="c2_21" class="t" style="left:367.50px;top:510.46px;font-size:16px;line-height:22px;color:#000;font-weight:bold;transform:translateX(-50%) scaleX(0.9950)">1,691,346</div>
<div id="c3_21" class="t" style="left:447.50px;top:510.46px;font-size:16px;line-height:22px;color:#000;font-weight:bold;transform:translateX(-50%) scaleX(0.9950)">1,718,957</div>
<div id="c4_21" class="t" style="left:527.50px;top:510.46px;font-size:16px;line-height:22px;color:#000;font-weight:bold;transform:translateX(-50%) scaleX(0.9950)">1,363,400</div>
<div id="c5_21" class="t" style="left:607.50px;top:510.46px;font-size:16px;line-height:22px;color:#000;font-weight:bold;transform:translateX(-50%) scaleX(0.9950)">1,134,728</div>
<div id="c6_21" class="t" style="left:687.50px;top:510.46px;font-size:16px;line-height:22px;color:#000;font-weight:bold;transform:translateX(-50%) scaleX(0.9950)">1,095,563</div>
<div id="ind" class="t" style="left:178.70px;top:563.30px;font-size:15px;line-height:21px;color:#000;font-weight:bold;transform:translateX(-50%) scaleX(0.9684)">Indicator</div>
<div id="per" class="t" style="left:526.50px;top:552.30px;font-size:15px;line-height:21px;color:#000;font-weight:bold;transform:translateX(-50%) scaleX(1.0180)">Period</div>
<div id="c2_24" class="t" style="left:367.50px;top:576.46px;font-size:16px;line-height:22px;color:#000;font-weight:bold;transform:translateX(-50%) scaleX(0.9950)">2021</div>
<div id="c3_24" class="t" style="left:447.50px;top:576.46px;font-size:16px;line-height:22px;color:#000;font-weight:bold;transform:translateX(-50%) scaleX(0.9950)">2022</div>
<div id="c4_24" class="t" style="left:527.50px;top:576.46px;font-size:16px;line-height:22px;color:#000;font-weight:bold;transform:translateX(-50%) scaleX(0.9950)">2023</div>
<div id="c5_24" class="t" style="left:607.50px;top:576.46px;font-size:16px;line-height:22px;color:#000;font-weight:bold;transform:translateX(-50%) scaleX(0.9950)">2024</div>
<div id="c6_24" class="t" style="left:687.50px;top:576.46px;font-size:16px;line-height:22px;color:#000;font-weight:bold;transform:translateX(-50%) scaleX(0.9950)">2025</div>
<div id="acc1" class="t" style="left:177.60px;top:600.30px;font-size:15px;line-height:21px;color:#000;transform:translateX(-50%) scaleX(0.9778)">Accounts Receivable to Accounts Payable</div>
<div id="acc2" class="t" style="left:176.70px;top:620.30px;font-size:15px;line-height:21px;color:#000;transform:translateX(-50%) scaleX(0.9651)">Ratio</div>
<div id="c2_25" class="t" style="left:367.50px;top:608.46px;font-size:16px;line-height:22px;color:#000;transform:translateX(-50%) scaleX(1.0000)">93%</div>
<div id="c3_25" class="t" style="left:447.50px;top:608.46px;font-size:16px;line-height:22px;color:#000;transform:translateX(-50%) scaleX(1.0000)">111%</div>
<div id="c4_25" class="t" style="left:527.50px;top:608.46px;font-size:16px;line-height:22px;color:#000;transform:translateX(-50%) scaleX(1.0000)">59%</div>
<div id="c5_25" class="t" style="left:607.50px;top:608.46px;font-size:16px;line-height:22px;color:#000;transform:translateX(-50%) scaleX(1.0000)">42%</div>
<div id="c6_25" class="t" style="left:687.50px;top:608.46px;font-size:16px;line-height:22px;color:#000;transform:translateX(-50%) scaleX(1.0000)">47%</div>
<div class="r" style="left:646px;top:594px;width:83px;height:2px;background:#217346"></div>
<div class="r" style="left:646px;top:639px;width:83px;height:2px;background:#217346"></div>
<div class="r" style="left:646px;top:594px;width:2px;height:47px;background:#217346"></div>
<div class="r" style="left:727px;top:594px;width:2px;height:47px;background:#217346"></div>
<div class="r" style="left:725px;top:637px;width:5px;height:5px;background:#217346;box-shadow:0 0 0 1px #fff"></div>
</body></html>
